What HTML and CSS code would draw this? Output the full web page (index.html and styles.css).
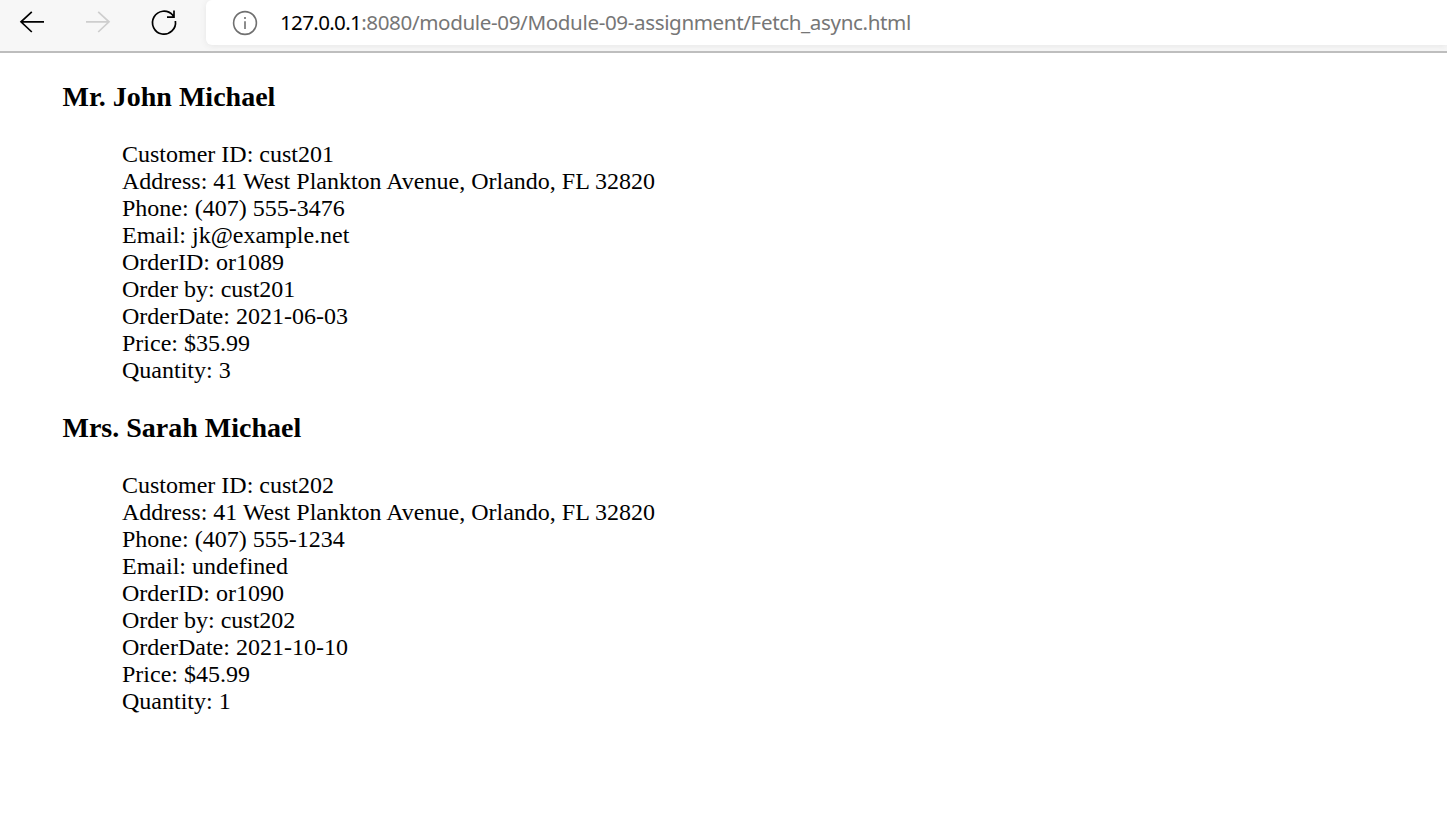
FILE: index.html
```html
<!DOCTYPE html>
<html lang="en">
<head>
<meta charset="utf-8">
<title>Fetch_async</title>
<link rel="stylesheet" href="styles.css">
</head>
<body>
<header class="toolbar">
  <nav class="nav">
    <svg class="icon" width="28" height="28" viewBox="0 0 28 28"><path d="M13.800 3.800 3 13.800l10.800 10.200M3 13.800h23"/></svg>
    <svg class="icon disabled" width="28" height="28" viewBox="0 0 28 28"><path d="M14.200 3.800 25 13.800 14.200 24M25 13.800H2"/></svg>
    <svg class="icon" width="28" height="28" viewBox="0 0 28 28"><path d="M25.400 13A11.500 11.500 0 1 1 22.600 7L24 9M24 2.500V9.200H17"/></svg>
  </nav>
  <div class="address">
    <svg class="info" width="26" height="26" viewBox="0 0 26 26"><circle cx="13" cy="13" r="11.400"/><path d="M13 11.200v7.800M13 7v2"/></svg>
    <span class="url"><span class="host">127.0.0.1</span>:8080/module-09/Module-09-assignment/Fetch_async.html</span>
  </div>
</header>
<main class="content">
  <h3 class="name">Mr. John Michael</h3>
  <ul class="details">
    <li><span>Customer ID: cust201</span></li>
    <li><span>Address: 41 West Plankton Avenue, Orlando, FL 32820</span></li>
    <li><span>Phone: (407) 555-3476</span></li>
    <li><span>Email: jk@example.net</span></li>
    <li><span>OrderID: or1089</span></li>
    <li><span>Order by: cust201</span></li>
    <li><span>OrderDate: 2021-06-03</span></li>
    <li><span>Price: $35.99</span></li>
    <li><span>Quantity: 3</span></li>
  </ul>
  <h3 class="name">Mrs. Sarah Michael</h3>
  <ul class="details">
    <li><span>Customer ID: cust202</span></li>
    <li><span>Address: 41 West Plankton Avenue, Orlando, FL 32820</span></li>
    <li><span>Phone: (407) 555-1234</span></li>
    <li><span>Email: undefined</span></li>
    <li><span>OrderID: or1090</span></li>
    <li><span>Order by: cust202</span></li>
    <li><span>OrderDate: 2021-10-10</span></li>
    <li><span>Price: $45.99</span></li>
    <li><span>Quantity: 1</span></li>
  </ul>
</main>
</body>
</html>
```
FILE: styles.css
```css
body { margin: 0; background: #fff; color: #000; font-family: "Liberation Serif", "Times New Roman", serif; }
.toolbar { box-sizing: border-box; height: 53px; display: flex; background: #f7f7f7; border-bottom: 2px solid #bdbdbd; }
.nav { box-sizing: border-box; width: 206px; padding: 8px 0 0 18px; display: flex; gap: 38px; }
.icon { flex: none; fill: none; stroke: #000; stroke-width: 1.7; }
.disabled { stroke: #cecece; }
.address { flex: 1; height: 45px; display: flex; align-items: center; background: #fff; border-radius: 6px 0 0 6px; box-shadow: 0 1px 6px #e6e6e6; }
.info { margin: 0 22px 0 26px; fill: none; stroke: #707070; stroke-width: 1.6; }
.url { font: 20.6px/45px "Noto Sans", sans-serif; letter-spacing: -0.37px; color: #767676; white-space: nowrap; }
.host { color: #000; letter-spacing: -0.68px; }
.content { padding: 28px 0 0 62.5px; }
.name { margin: 0; font-size: 28px; line-height: 32px; }
.details { margin: 28px 0 28px 59.5px; padding: 0; list-style: none; font-size: 24px; line-height: 27px; }
```
